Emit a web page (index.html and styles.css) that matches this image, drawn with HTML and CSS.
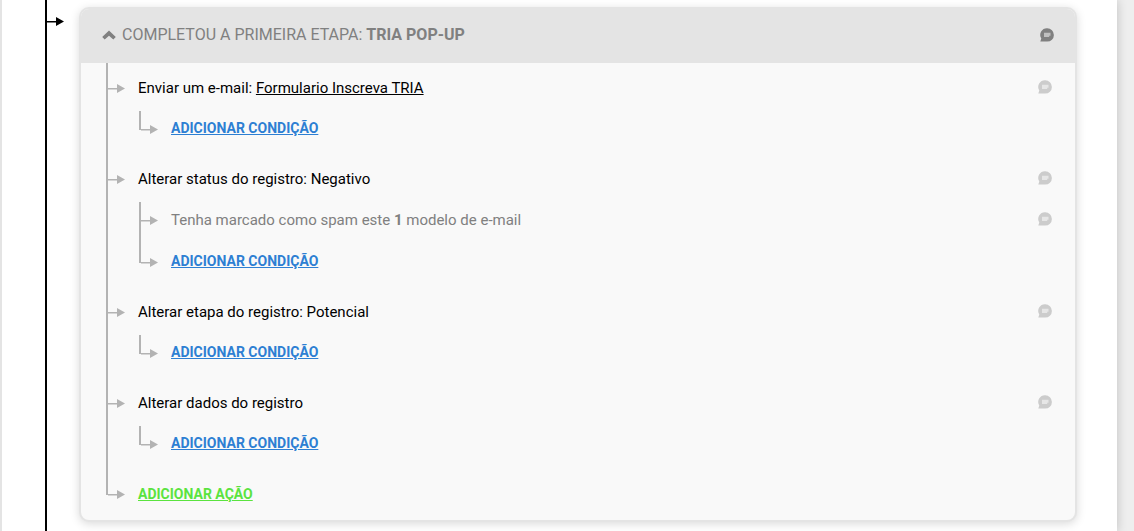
FILE: index.html
```html
<!DOCTYPE html>
<html lang="pt-BR">
<head>
<meta charset="utf-8">
<meta name="viewport" content="width=device-width, initial-scale=1">
<title>Automação</title>
<link rel="stylesheet" href="styles.css">
</head>
<body>
<svg class="defs" aria-hidden="true">
  <symbol id="arrow" viewBox="0 0 17 10"><path fill="currentColor" d="M0 5h9V1l8 4.500L9 10V6.500H0z"/></symbol>
  <symbol id="chat" viewBox="0 0 14 14">
    <path fill="currentColor" d="M7.200 .2a6.700 6.700 0 1 1 0 13.400H.3L1.300 10.500A6.700 6.700 0 0 1 7.200 .2z"/>
    <path class="chat-lines" d="M4 4.800h6.500v2.900H9.200v1.300H4z"/>
  </symbol>
</svg>
<main class="page">
  <div class="timeline">
    <svg class="arrow arrow-main" aria-hidden="true"><use href="#arrow"/></svg>
    <section class="card">
      <header class="card-header">
        <button class="toggle" type="button" aria-label="Recolher">
          <svg class="chevron" viewBox="0 0 14 10" aria-hidden="true"><path fill="currentColor" d="M7 .5l6.800 6.500-2.500 2.500L7 5.700 2.700 9.500 .2 7z"/></svg>
        </button>
        <h1 class="title">COMPLETOU A PRIMEIRA ETAPA: <strong>TRIA POP-UP</strong></h1>
        <button class="note" type="button" aria-label="Comentário"><svg class="chat"><use href="#chat"/></svg></button>
      </header>
      <ul class="actions">
        <li class="action">
          <div class="row">
            <svg class="arrow" aria-hidden="true"><use href="#arrow"/></svg>
            <span class="label">Enviar um e-mail: <a class="template" href="#">Formulario Inscreva TRIA</a></span>
            <button class="note" type="button" aria-label="Comentário"><svg class="chat"><use href="#chat"/></svg></button>
          </div>
          <ul class="conditions">
            <li class="condition"><div class="row"><svg class="arrow" aria-hidden="true"><use href="#arrow"/></svg><a class="add" href="#">ADICIONAR CONDIÇÃO</a></div></li>
          </ul>
        </li>
        <li class="action">
          <div class="row">
            <svg class="arrow" aria-hidden="true"><use href="#arrow"/></svg>
            <span class="label">Alterar status do registro: Negativo</span>
            <button class="note" type="button" aria-label="Comentário"><svg class="chat"><use href="#chat"/></svg></button>
          </div>
          <ul class="conditions">
            <li class="condition">
              <div class="row">
                <svg class="arrow" aria-hidden="true"><use href="#arrow"/></svg>
                <span class="label muted">Tenha marcado como spam este <strong>1</strong> modelo de e-mail</span>
                <button class="note" type="button" aria-label="Comentário"><svg class="chat"><use href="#chat"/></svg></button>
              </div>
            </li>
            <li class="condition"><div class="row"><svg class="arrow" aria-hidden="true"><use href="#arrow"/></svg><a class="add" href="#">ADICIONAR CONDIÇÃO</a></div></li>
          </ul>
        </li>
        <li class="action">
          <div class="row">
            <svg class="arrow" aria-hidden="true"><use href="#arrow"/></svg>
            <span class="label">Alterar etapa do registro: Potencial</span>
            <button class="note" type="button" aria-label="Comentário"><svg class="chat"><use href="#chat"/></svg></button>
          </div>
          <ul class="conditions">
            <li class="condition"><div class="row"><svg class="arrow" aria-hidden="true"><use href="#arrow"/></svg><a class="add" href="#">ADICIONAR CONDIÇÃO</a></div></li>
          </ul>
        </li>
        <li class="action">
          <div class="row">
            <svg class="arrow" aria-hidden="true"><use href="#arrow"/></svg>
            <span class="label">Alterar dados do registro</span>
            <button class="note" type="button" aria-label="Comentário"><svg class="chat"><use href="#chat"/></svg></button>
          </div>
          <ul class="conditions">
            <li class="condition"><div class="row"><svg class="arrow" aria-hidden="true"><use href="#arrow"/></svg><a class="add" href="#">ADICIONAR CONDIÇÃO</a></div></li>
          </ul>
        </li>
        <li class="action">
          <div class="row"><svg class="arrow" aria-hidden="true"><use href="#arrow"/></svg><a class="add add-action" href="#">ADICIONAR AÇÃO</a></div>
        </li>
      </ul>
    </section>
  </div>
</main>
</body>
</html>
```
FILE: styles.css
```css
* { box-sizing: border-box; }

body {
  margin: 0;
  background: #eee;
  color: #000;
  font: 15px/20px Roboto, Arial, sans-serif;
}

ul { list-style: none; margin: 0; padding: 0; }

button {
  display: flex;
  padding: 0;
  border: 0;
  background: none;
  color: inherit;
  cursor: pointer;
}

.defs { display: none; }

.page {
  display: flex;
  min-height: 100vh;
  margin-right: 17px;
  padding-left: 43px;
  border-left: 2px solid #e4e4e4;
  background: #fff;
  box-shadow: 0 0 10px rgba(0, 0, 0, .2);
}

.timeline {
  display: flex;
  flex: 1;
  align-items: flex-start;
  gap: 15px;
  padding: 7px 40px 10px 0;
  border-left: 2px solid #000;
}

.arrow { flex: none; width: 17px; height: 10px; color: #b3b3b3; }
.arrow-main { margin-top: 9px; color: #000; }

.card {
  flex: 1;
  overflow: hidden;
  border: 2px solid #e4e4e4;
  border-radius: 10px;
  background: #f9f9f9;
  box-shadow: 0 2px 10px rgba(0, 0, 0, .15);
}

.card-header {
  display: flex;
  align-items: center;
  height: 54px;
  padding: 0 21px 2px;
  background: #e4e4e4;
  color: #808080;
}

.chevron { width: 14px; height: 10px; }

.title {
  flex: 1;
  margin: 0 0 0 6px;
  font-size: 16px;
  font-weight: 400;
}

.note { margin-left: auto; }
.chat { width: 14px; height: 14px; }
.chat-lines { fill: #fff; opacity: .5; }

.actions { padding: 0 23px 0 25px; }

.action {
  padding: 15px 0 16px;
  background: linear-gradient(#b3b3b3, #b3b3b3) no-repeat 0 0 / 2px 100%;
}

.action:last-child { background-size: 2px 26px; }

.row {
  display: flex;
  align-items: center;
  padding-left: 2px;
  gap: 13px;
}

.row .note { padding-bottom: 2px; color: #ccc; }

.conditions { margin: 13px 0 0 33px; }

.condition {
  padding: 8px 0 14px;
  background: linear-gradient(#b3b3b3, #b3b3b3) no-repeat 0 0 / 2px 100%;
}

.condition:last-child { padding: 7px 0 0; background-size: 2px 19px; }
.condition:last-child .arrow { margin-top: 2px; }

.muted { color: #808080; }

.template { color: inherit; }
.add { color: #2d7fd3; font-size: 14px; font-weight: 700; }
.add-action { color: #5be33f; }
```
